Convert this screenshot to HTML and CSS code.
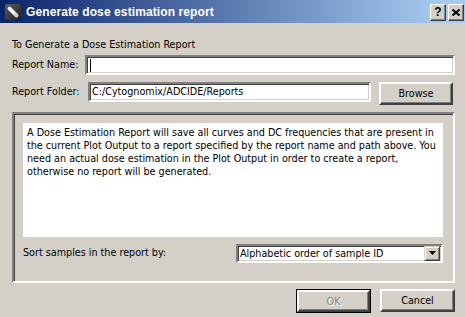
FILE: index.html
```html
<!DOCTYPE html>
<html>
<head>
<meta charset="utf-8">
<link rel="stylesheet" href="styles.css">
</head>
<body>
<div class="window">
  <div class="titlebar">
    <svg class="app-icon" width="16" height="16" viewBox="0 0 16 16">
      <defs>
        <linearGradient id="ig" x1="0" y1="0" x2="1" y2="1">
          <stop offset="0" stop-color="#606060"/>
          <stop offset="1" stop-color="#1e1e1e"/>
        </linearGradient>
      </defs>
      <rect x="0" y="0" width="16" height="16" rx="2" fill="url(#ig)"/>
      <line x1="4.5" y1="4.5" x2="11.5" y2="11.5" stroke="#cfcfcf" stroke-width="4" stroke-linecap="round"/>
      <line x1="4.5" y1="4.5" x2="9" y2="9" stroke="#ffffff" stroke-width="2.2" stroke-linecap="round"/>
    </svg>
    <span class="title">Generate dose estimation report</span>
    <div class="caption-btns">
      <div class="cap-btn help">?</div>
      <div class="cap-btn close">
        <svg width="8" height="7" viewBox="0 0 8 7">
          <path d="M0.5 0.5 L7.5 6.5 M7.5 0.5 L0.5 6.5" stroke="#000" stroke-width="2" fill="none"/>
        </svg>
      </div>
    </div>
  </div>

  <div class="content">
    <div class="heading">To Generate a Dose Estimation Report</div>

    <div class="row row-name">
      <label class="lbl">Report Name:</label>
      <div class="field field-name"><span class="caret"></span></div>
    </div>

    <div class="row row-folder">
      <label class="lbl">Report Folder:</label>
      <div class="field field-folder">C:/Cytognomix/ADCIDE/Reports</div>
      <div class="btn btn-browse"><span>Browse</span></div>
    </div>

    <div class="group">
      <div class="info">A Dose Estimation Report will save all curves and DC frequencies that are present in<br>the current Plot Output to a report specified by the report name and path above. You<br>need an actual dose estimation in the Plot Output in order to create a report,<br>otherwise no report will be generated.</div>
      <div class="sort-row">
        <span class="sort-lbl">Sort samples in the report by:</span>
        <div class="combo">
          <span class="combo-text">Alphabetic order of sample ID</span>
          <div class="combo-btn">
            <svg width="7" height="4" viewBox="0 0 7 4"><path d="M0 0 H7 L3.5 4 Z" fill="#000"/></svg>
          </div>
        </div>
      </div>
    </div>

    <div class="actions">
      <div class="default-ring"><div class="btn btn-ok disabled"><span>OK</span></div></div>
      <div class="btn btn-cancel"><span>Cancel</span></div>
    </div>
  </div>
</div>
</body>
</html>
```

FILE: styles.css
```css
html, body {
  margin: 0;
  padding: 0;
}
body {
  width: 465px;
  height: 317px;
  overflow: hidden;
  background: #d4d0c8;
  font-family: "DejaVu Sans Condensed", "DejaVu Sans", sans-serif;
  font-size: 10.7px;
  color: #000;
}
.window {
  display: flex;
  flex-direction: column;
  height: 317px;
}
.titlebar {
  height: 23px;
  flex: none;
  display: flex;
  align-items: center;
  background: linear-gradient(to right, #0a246a 0%, #a6caf0 95%);
  padding-left: 5px;
}
.app-icon {
  flex: none;
  margin-top: 1px;
}
.title {
  margin-left: 5px;
  color: #fff;
  font-family: "Liberation Sans", Arial, sans-serif;
  font-weight: bold;
  font-size: 12px;
  letter-spacing: 0.1px;
  flex: 1;
}
.caption-btns {
  display: flex;
  gap: 2px;
  margin-right: 1px;
  margin-top: 1px;
}
.cap-btn {
  width: 12px;
  height: 13px;
  background: #d4d0c8;
  border-style: solid;
  border-width: 1px;
  border-color: #fff #404040 #404040 #fff;
  box-shadow: inset -1px -1px 0 #808080;
  display: flex;
  align-items: center;
  justify-content: center;
  font-family: "Liberation Sans", Arial, sans-serif;
  font-weight: bold;
  font-size: 12px;
  line-height: 13px;
  padding: 1px;
}
.content {
  flex: 1;
  display: flex;
  flex-direction: column;
  padding: 0 10px 0 12px;
}
.heading {
  margin-top: 15px;
  line-height: 13px;
}
.row {
  display: flex;
  align-items: flex-start;
}
.lbl {
  line-height: 20px;
}
.row-name {
  margin-top: 4px;
}
.row-name .lbl {
  width: 73px;
}
.row-folder {
  margin-top: 7px;
}
.row-folder .lbl {
  width: 76px;
}
.field {
  height: 16px;
  background: #fff;
  border: 2px solid;
  border-color: #808080 #fff #fff #808080;
  box-shadow: inset 1px 1px 0 #404040, inset -1px -1px 0 #d4d0c8;
  line-height: 16px;
  padding-left: 2px;
  display: flex;
  align-items: center;
}
.field-name {
  flex: 1;
}
.caret {
  width: 1px;
  height: 13px;
  background: #000;
  margin-left: 1px;
}
.field-folder {
  width: 277px;
}
.btn {
  height: 19px;
  background: #d4d0c8;
  border: 2px solid;
  border-color: #fff #404040 #404040 #fff;
  box-shadow: inset -1px -1px 0 #808080;
  display: flex;
  align-items: center;
  justify-content: center;
}
.btn-browse {
  margin-left: 8px;
  width: 70px;
}
.group {
  margin-top: 7px;
  height: 158px;
  border: 2px solid;
  border-color: #808080 #fff #fff #808080;
  box-shadow: inset 1px 1px 0 #404040, inset -1px -1px 0 #d4d0c8;
  display: flex;
  flex-direction: column;
  padding: 9px 10px 0 9px;
}
.info {
  background: #fff;
  height: 111px;
  padding: 3px 0 0 4px;
  line-height: 13px;
  white-space: nowrap;
}
.sort-row {
  display: flex;
  align-items: center;
  margin-top: 6px;
}
.sort-lbl {
  width: 213px;
  line-height: 20px;
}
.combo {
  width: 201px;
  height: 15px;
  background: #fff;
  border: 2px solid;
  border-color: #808080 #fff #fff #808080;
  box-shadow: inset 1px 1px 0 #404040, inset -1px -1px 0 #d4d0c8;
  display: flex;
  align-items: center;
  justify-content: space-between;
  padding-left: 2px;
}
.combo-btn {
  width: 12px;
  height: 11px;
  background: #d4d0c8;
  border: 1px solid;
  border-color: #d4d0c8 #404040 #404040 #d4d0c8;
  box-shadow: inset 1px 1px 0 #fff, inset -1px -1px 0 #808080;
  display: flex;
  align-items: center;
  justify-content: center;
  margin-right: 1px;
  padding: 1px;
}
.actions {
  display: flex;
  justify-content: flex-end;
  margin-top: 6px;
  gap: 9px;
}
.default-ring {
  border: 1px solid #000;
}
.btn-ok {
  width: 69px;
  height: 18px;
}
.btn-cancel {
  width: 71px;
}
.disabled {
  color: #808080;
  text-shadow: 1px 1px 0 #fff;
}
```
